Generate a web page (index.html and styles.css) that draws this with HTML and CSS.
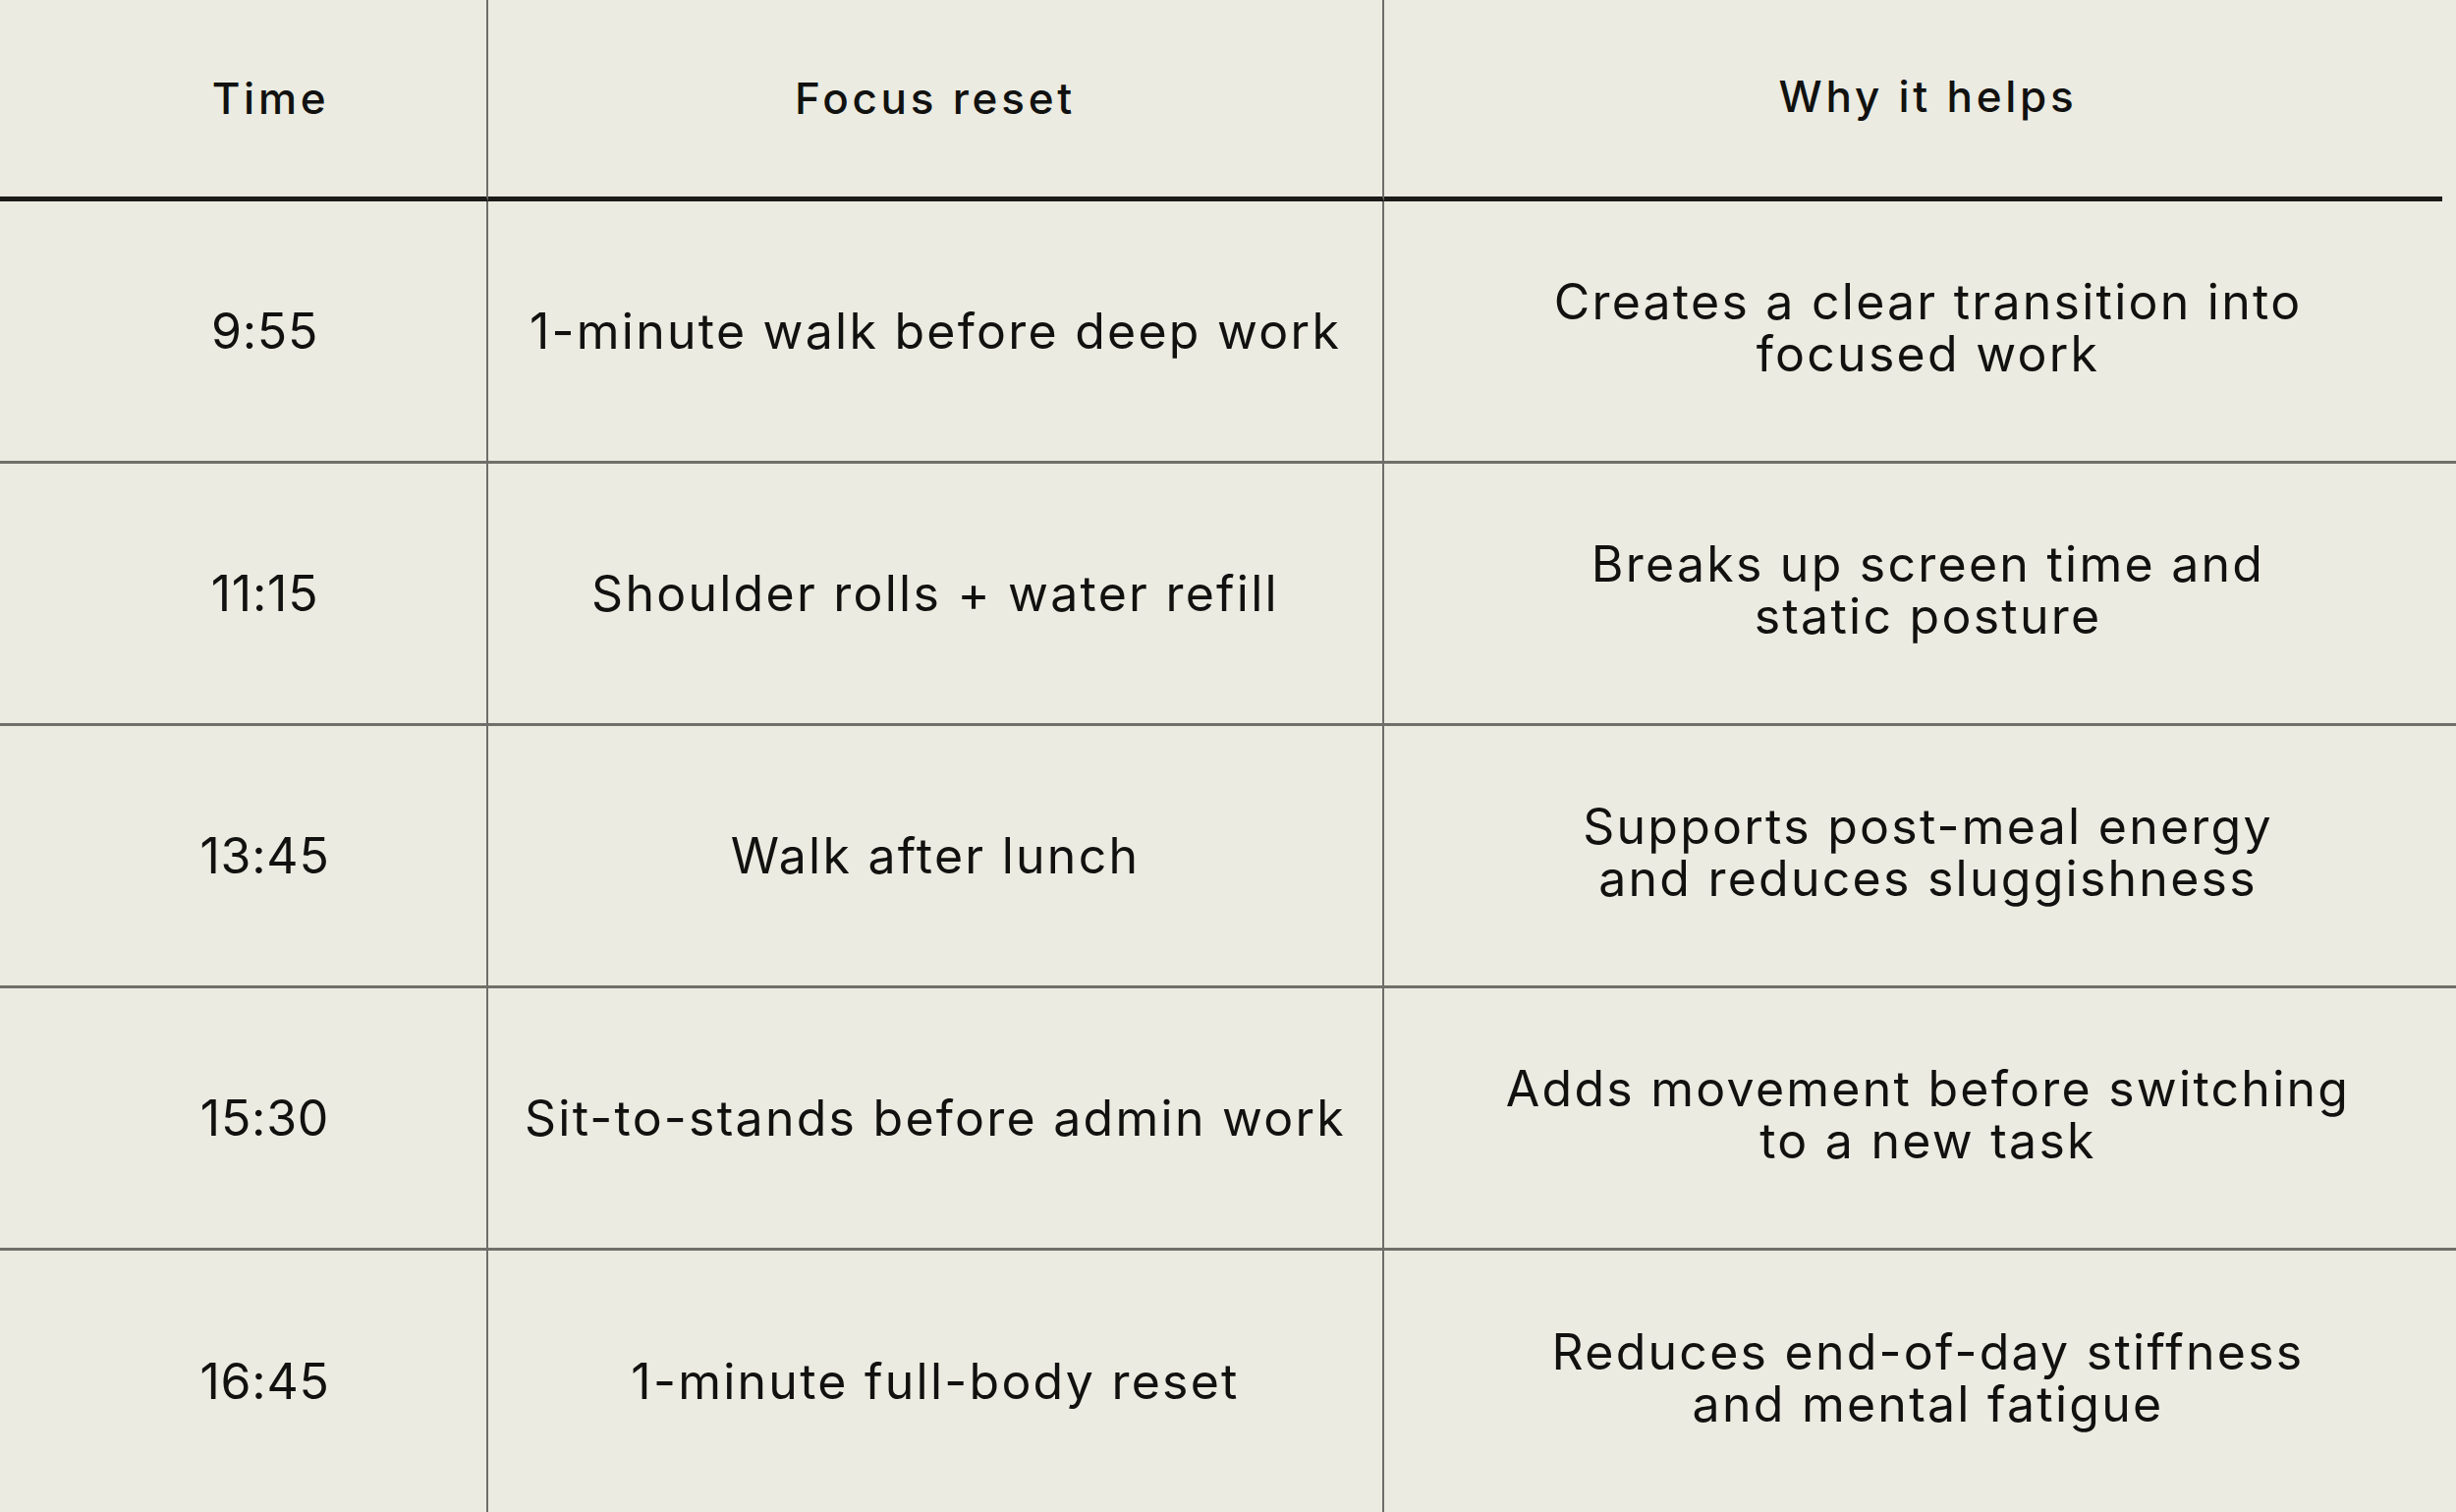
FILE: index.html
```html
<!DOCTYPE html>
<html lang="en">
<head>
<meta charset="utf-8">
<title>Focus resets</title>
<link rel="stylesheet" href="styles.css">
</head>
<body>
<div class="table">
  <div class="cell head c1">Time</div>
  <div class="cell head c2">Focus reset</div>
  <div class="cell head c3">Why it helps</div>

  <div class="cell c1">9:55</div>
  <div class="cell c2">1-minute walk before deep work</div>
  <div class="cell c3">Creates a clear transition into<br>focused work</div>

  <div class="cell c1">11:15</div>
  <div class="cell c2">Shoulder rolls + water refill</div>
  <div class="cell c3">Breaks up screen time and<br>static posture</div>

  <div class="cell c1">13:45</div>
  <div class="cell c2">Walk after lunch</div>
  <div class="cell c3">Supports post-meal energy<br>and reduces sluggishness</div>

  <div class="cell c1">15:30</div>
  <div class="cell c2">Sit-to-stands before admin work</div>
  <div class="cell c3">Adds movement before switching<br>to a new task</div>

  <div class="cell c1 last">16:45</div>
  <div class="cell c2 last">1-minute full-body reset</div>
  <div class="cell c3 last">Reduces end-of-day stiffness<br>and mental fatigue</div>
</div>
</body>
</html>
```

FILE: styles.css
```css
html, body {
  margin: 0;
  padding: 0;
  background: #ebebe1;
}

body {
  font-family: Inter, "Open Sans", "Liberation Sans", sans-serif;
  color: #111110;
}

.table {
  display: grid;
  grid-template-columns: 497px 912px 1fr;
  grid-template-rows: 205px repeat(4, 267px) 1fr;
  height: 100vh;
  width: 100%;
}

.cell {
  display: flex;
  align-items: center;
  justify-content: center;
  text-align: center;
  font-size: 50px;
  font-weight: 400;
  line-height: 53px;
  letter-spacing: 0.045em;
  border-bottom: 3px solid #70706a;
}

.c1 {
  border-right: 2px solid #6e6e69;
  padding-left: 44px;
  letter-spacing: 0.015em;
}

.c2 {
  border-right: 2px solid #6e6e69;
}

.c3 {
  padding-left: 16px;
  padding-bottom: 6px;
}

.head {
  font-size: 44px;
  font-weight: 500;
  letter-spacing: 0.085em;
  border-bottom: 5px solid #1b1b19;
}

.head.c1 {
  padding-left: 56px;
}

.head.c3 {
  padding-bottom: 8px;
  border-bottom: none;
  background: linear-gradient(#1b1b19, #1b1b19) left bottom / calc(100% - 14px) 5px no-repeat;
}

.last {
  border-bottom: none;
}
```
